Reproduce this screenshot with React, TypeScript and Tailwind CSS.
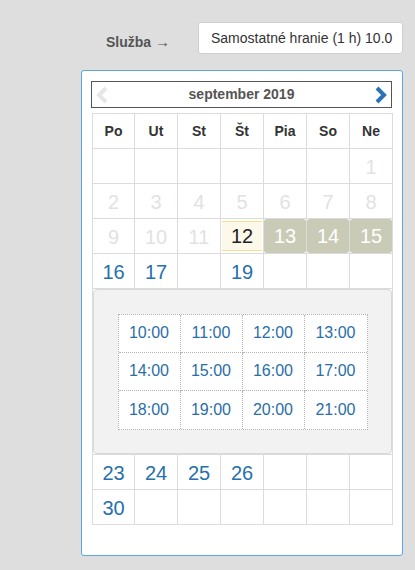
import React from 'react';

type Day = { n?: number; kind?: 'off' | 'free' | 'today' | 'busy' };

const heads = ['Po', 'Ut', 'St', 'Št', 'Pia', 'So', 'Ne'];

const weeksTop: Day[][] = [
  [{}, {}, {}, {}, {}, {}, { n: 1, kind: 'off' }],
  [2, 3, 4, 5, 6, 7, 8].map((n) => ({ n, kind: 'off' as const })),
  [
    { n: 9, kind: 'off' },
    { n: 10, kind: 'off' },
    { n: 11, kind: 'off' },
    { n: 12, kind: 'today' },
    { n: 13, kind: 'busy' },
    { n: 14, kind: 'busy' },
    { n: 15, kind: 'busy' },
  ],
  [{ n: 16, kind: 'free' }, { n: 17, kind: 'free' }, {}, { n: 19, kind: 'free' }, {}, {}, {}],
];

const weeksBottom: Day[][] = [
  [{ n: 23, kind: 'free' }, { n: 24, kind: 'free' }, { n: 25, kind: 'free' }, { n: 26, kind: 'free' }, {}, {}, {}],
  [{ n: 30, kind: 'free' }, {}, {}, {}, {}, {}, {}],
];

const times = ['10:00', '11:00', '12:00', '13:00', '14:00', '15:00', '16:00', '17:00', '18:00', '19:00', '20:00', '21:00'];

function DayCell({ d }: { d: Day }) {
  const base = 'border border-[#dcdcdc] h-[35px] p-0 text-center align-middle text-[20px] leading-none';
  if (d.kind === 'today') {
    return (
      <td className={base}>
        <div className="mx-[1px] h-[30px] flex items-center justify-center bg-[#fcf9ea] border-y border-[#f5df8c] text-[#222]">
          {d.n}
        </div>
      </td>
    );
  }
  if (d.kind === 'busy') {
    return (
      <td className={base}>
        <div className="h-[34px] flex items-center justify-center bg-[#c9cbb6] rounded-[3px] text-white">{d.n}</div>
      </td>
    );
  }
  const color = d.kind === 'off' ? 'text-[#e2e2e2]' : 'text-[#2670ad]';
  return <td className={`${base} ${color} pt-[2px]`}>{d.n}</td>;
}

function Chevron({ dir, color }: { dir: 'l' | 'r'; color: string }) {
  return (
    <svg width="14" height="18" viewBox="0 0 14 18">
      <polyline
        points={dir === 'r' ? '3,2 10,9 3,16' : '11,2 4,9 11,16'}
        fill="none"
        stroke={color}
        strokeWidth="4"
        strokeLinejoin="miter"
      />
    </svg>
  );
}

export default function App() {
  return (
    <div className="min-h-[570px] w-[415px] bg-[#dedede] font-['Liberation_Sans',Arial,sans-serif] pt-[22px]">
      {/* service selector */}
      <div className="flex items-center">
        <span className="ml-[106px] w-[92px] text-[14px] font-bold text-[#555] pt-[8px]">
          Služba <span className="font-normal text-[15px]">→</span>
        </span>
        <div className="w-[205px] h-[32px] bg-white rounded-[3px] border border-[#cfcfcf] pl-[12px] flex items-center overflow-hidden whitespace-nowrap text-[14px] text-[#333]">
          Samostatné hranie (1 h) 10.0
        </div>
      </div>

      {/* calendar panel */}
      <div className="ml-[81px] mt-[16px] w-[322px] h-[486px] bg-white border border-[#58a9e2] rounded-[3px] pl-[9px] pt-[10px]">
        <div className="w-[301px] h-[27px] border border-[#555] flex items-center justify-between px-[3px]">
          <Chevron dir="l" color="#e6e6e6" />
          <span className="text-[14px] font-bold text-[#555]">september 2019</span>
          <Chevron dir="r" color="#2a72b5" />
        </div>

        <table className="mt-[5px] ml-[1px] w-[300px] border-collapse table-fixed">
          <colgroup>
            <col className="w-[42px]" />
            <col className="w-[43px]" />
            <col className="w-[43px]" />
            <col className="w-[43px]" />
            <col className="w-[43px]" />
            <col className="w-[43px]" />
            <col className="w-[43px]" />
          </colgroup>
          <thead>
            <tr>
              {heads.map((h) => (
                <th key={h} className="border border-[#dcdcdc] h-[35px] p-0 text-[14px] font-bold text-[#333]">
                  {h}
                </th>
              ))}
            </tr>
          </thead>
          <tbody>
            {weeksTop.map((w, i) => (
              <tr key={'t' + i}>
                {w.map((d, j) => (
                  <DayCell key={j} d={d} />
                ))}
              </tr>
            ))}
            <tr>
              <td colSpan={7} className="border border-[#dcdcdc] p-0">
                <div className="h-[165px] bg-[#f2f2f2] border border-[#d8d8d8] rounded-[4px] flex items-center justify-center">
                  <div className="grid grid-cols-[62px_62px_62px_62px] bg-white border border-dotted border-[#b5b5b5]">
                    {times.map((t, k) => (
                      <div
                        key={t}
                        className={`h-[38px] flex items-center justify-center text-[16px] text-[#2a6ea8] border-dotted border-[#b5b5b5] ${
                          k % 4 !== 3 ? 'border-r' : ''
                        } ${k < 8 ? 'border-b' : ''}`}
                      >
                        {t}
                      </div>
                    ))}
                  </div>
                </div>
              </td>
            </tr>
            {weeksBottom.map((w, i) => (
              <tr key={'b' + i}>
                {w.map((d, j) => (
                  <DayCell key={j} d={d} />
                ))}
              </tr>
            ))}
          </tbody>
        </table>
      </div>
    </div>
  );
}
